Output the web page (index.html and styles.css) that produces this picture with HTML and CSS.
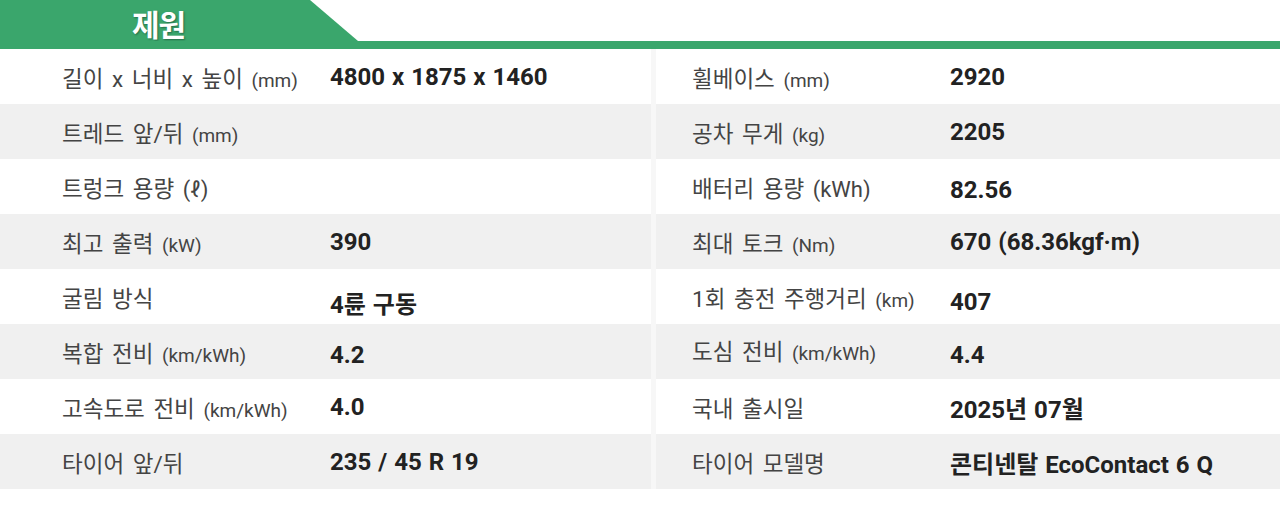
FILE: index.html
```html
<!DOCTYPE html>
<html lang="ko">
<head>
<meta charset="utf-8">
<title>제원</title>
<link rel="stylesheet" href="styles.css">
</head>
<body>
<section class="spec">
  <header class="head">
    <div class="tab"><h2 class="tab-title">제원</h2></div>
    <div class="bar"></div>
  </header>
  <div class="table">
    <div class="row">
      <div class="cell cell-left"><span class="label">길이 x 너비 x 높이 <small>(mm)</small></span><span class="value">4800 x 1875 x 1460</span></div>
      <div class="cell cell-right"><span class="label">휠베이스 <small>(mm)</small></span><span class="value">2920</span></div>
    </div>
    <div class="row alt">
      <div class="cell cell-left"><span class="label">트레드 앞/뒤 <small>(mm)</small></span><span class="value"></span></div>
      <div class="cell cell-right"><span class="label">공차 무게 <small>(kg)</small></span><span class="value">2205</span></div>
    </div>
    <div class="row">
      <div class="cell cell-left"><span class="label">트렁크 용량 <span class="unit-lg">(ℓ)</span></span><span class="value"></span></div>
      <div class="cell cell-right"><span class="label">배터리 용량 <span class="unit-lg">(kWh)</span></span><span class="value low">82.56</span></div>
    </div>
    <div class="row alt">
      <div class="cell cell-left"><span class="label">최고 출력 <small>(kW)</small></span><span class="value">390</span></div>
      <div class="cell cell-right"><span class="label">최대 토크 <small>(Nm)</small></span><span class="value">670 (68.36kgf·m)</span></div>
    </div>
    <div class="row">
      <div class="cell cell-left"><span class="label">굴림 방식</span><span class="value lower">4륜 구동</span></div>
      <div class="cell cell-right"><span class="label">1회 충전 주행거리 <small>(km)</small></span><span class="value lower">407</span></div>
    </div>
    <div class="row alt">
      <div class="cell cell-left"><span class="label">복합 전비 <small>(km/kWh)</small></span><span class="value low">4.2</span></div>
      <div class="cell cell-right"><span class="label raise">도심 전비 <small>(km/kWh)</small></span><span class="value low">4.4</span></div>
    </div>
    <div class="row">
      <div class="cell cell-left"><span class="label">고속도로 전비 <small>(km/kWh)</small></span><span class="value">4.0</span></div>
      <div class="cell cell-right"><span class="label">국내 출시일</span><span class="value">2025년 07월</span></div>
    </div>
    <div class="row alt">
      <div class="cell cell-left"><span class="label">타이어 앞/뒤</span><span class="value">235 / 45 R 19</span></div>
      <div class="cell cell-right"><span class="label">타이어 모델명</span><span class="value">콘티넨탈 EcoContact 6 Q</span></div>
    </div>
  </div>
</section>
</body>
</html>
```

FILE: styles.css
```css
* { box-sizing: border-box; }

html, body {
  margin: 0;
  padding: 0;
  background: #ffffff;
}

body {
  font-family: Roboto, "Noto Sans CJK KR", "Noto Sans", sans-serif;
  color: #444444;
}

.spec {
  width: 1280px;
}

.head {
  display: flex;
  flex-direction: column;
}

.tab {
  width: 358px;
  height: 41px;
  background: #3aa66c;
  clip-path: polygon(0 0, 310px 0, 100% 100%, 0 100%);
  display: flex;
  align-items: center;
  padding-left: 132px;
  padding-top: 5px;
}

.tab-title {
  margin: 0;
  font-family: "Noto Sans CJK KR", sans-serif;
  font-weight: 700;
  font-size: 30px;
  line-height: 1;
  color: #ffffff;
  text-shadow: 1px 1px 2px rgba(0, 0, 0, 0.35);
  letter-spacing: -1px;
}

.bar {
  height: 8px;
  background: #3aa66c;
}

.table {
  display: flex;
  flex-direction: column;
}

.row {
  display: grid;
  grid-template-columns: 651px 1fr;
  column-gap: 5px;
  height: 55px;
  background: #f7f7f7;
}

.cell {
  display: grid;
  align-items: center;
  background: #ffffff;
  padding-top: 1px;
}

.row.alt .cell {
  background: #f0f0f0;
}

.cell-left {
  grid-template-columns: 268px 1fr;
  padding-left: 62px;
}

.cell-right {
  grid-template-columns: 258px 1fr;
  padding-left: 36px;
}

.label {
  font-size: 22.5px;
  color: #444444;
  white-space: nowrap;
  word-spacing: 3px;
}

.label small {
  font-size: 19px;
  word-spacing: 0;
}

.unit-lg {
  font-size: 22px;
}

.value {
  font-size: 24px;
  font-weight: 700;
  color: #222222;
  white-space: nowrap;
  word-spacing: 1px;
}

.value.low {
  padding-top: 5px;
}

.value.lower {
  padding-top: 10px;
}

.label.raise {
  padding-bottom: 4px;
}
```
